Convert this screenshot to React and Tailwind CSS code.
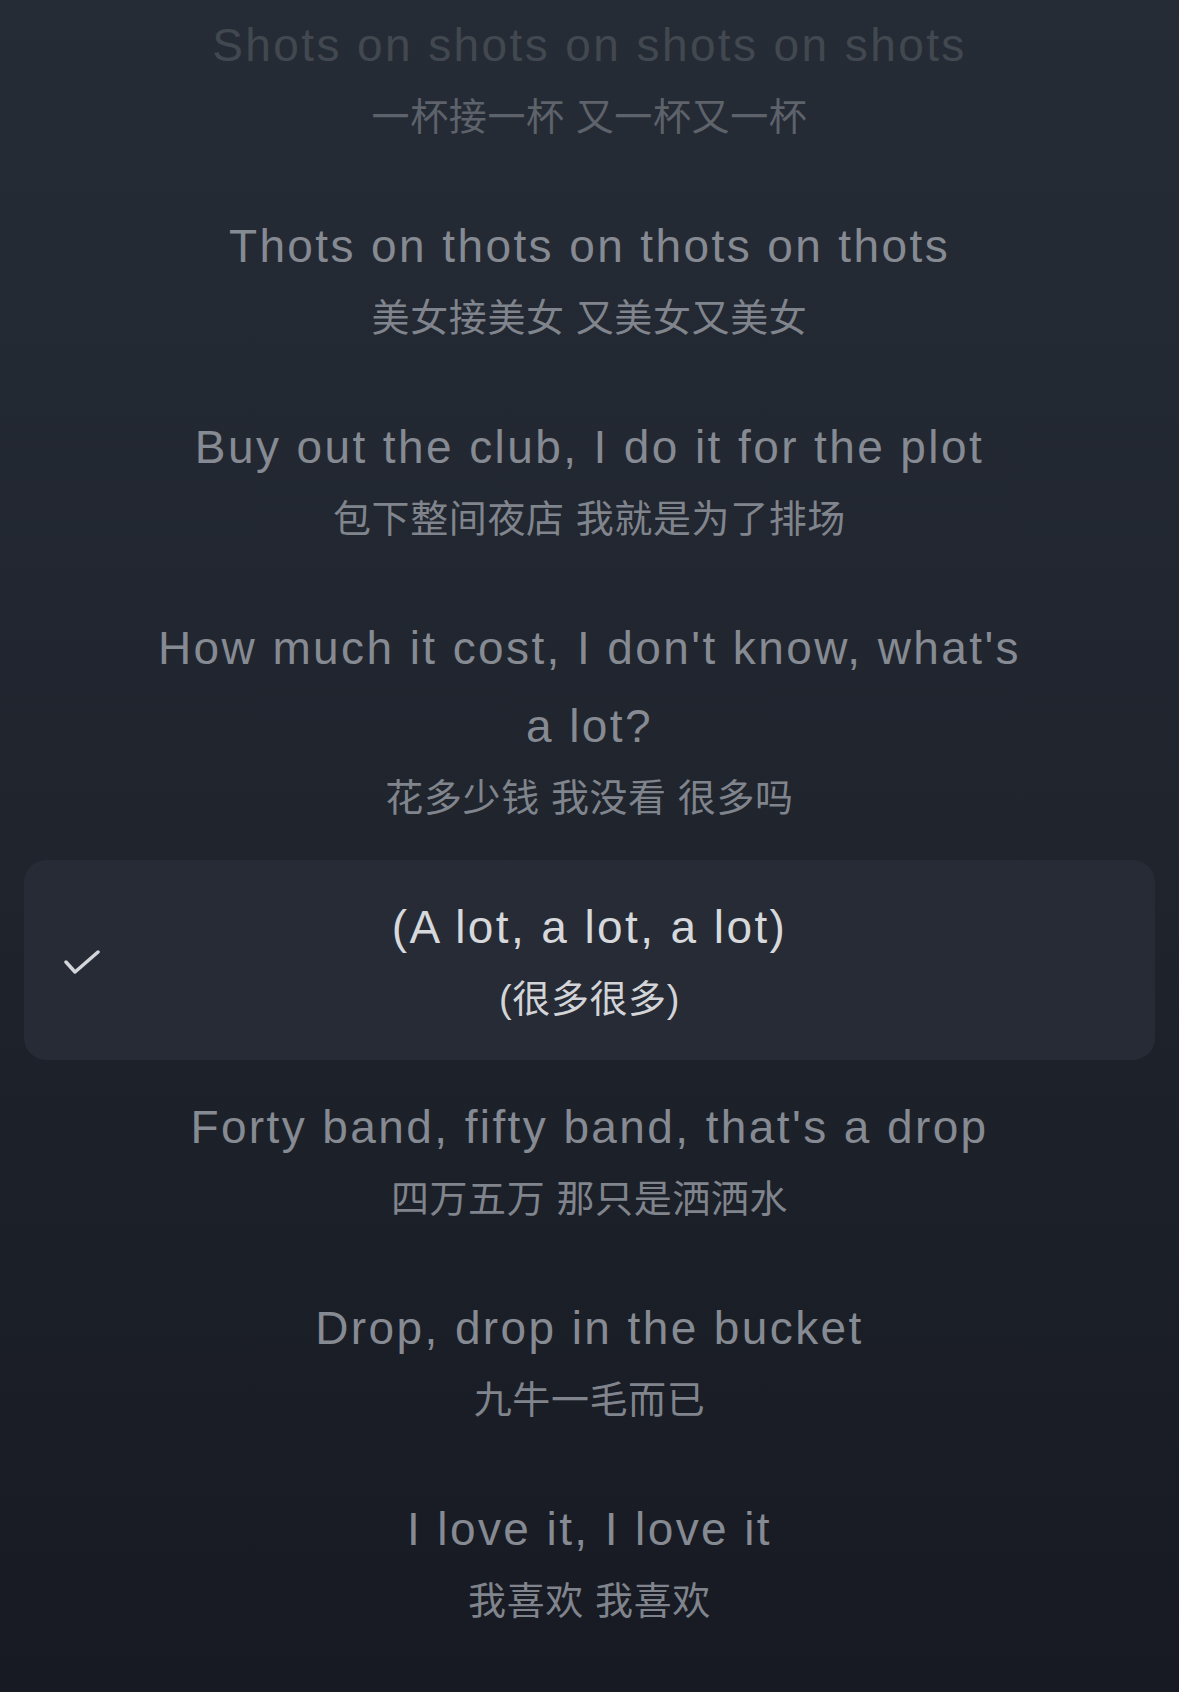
import React from "react";

const lyrics = [
  { en: "Shots on shots on shots on shots", zh: "一杯接一杯 又一杯又一杯", fade: true },
  { en: "Thots on thots on thots on thots", zh: "美女接美女 又美女又美女" },
  { en: "Buy out the club, I do it for the plot", zh: "包下整间夜店 我就是为了排场" },
  { en: "How much it cost, I don't know, what's a lot?", zh: "花多少钱 我没看 很多吗" },
  { en: "(A lot, a lot, a lot)", zh: "(很多很多)", active: true },
  { en: "Forty band, fifty band, that's a drop", zh: "四万五万 那只是洒洒水" },
  { en: "Drop, drop in the bucket", zh: "九牛一毛而已" },
  { en: "I love it, I love it", zh: "我喜欢 我喜欢" },
];

function Check() {
  return (
    <svg width="40" height="32" viewBox="0 0 40 32" className="absolute left-[40px] top-1/2 -translate-y-1/2 mt-[2px]">
      <path d="M2 16 L11 26 L34 6" fill="none" stroke="#d3d5d8" strokeWidth="3.5" strokeLinecap="round" strokeLinejoin="round" />
    </svg>
  );
}

function Line({ item }) {
  const enColor = item.active ? "text-[#d6d8db]" : item.fade ? "text-[#42484f]" : "text-[#868a92]";
  const zhColor = item.active ? "text-[#d2d4d7]" : item.fade ? "text-[#5d626b]" : "text-[#80848c]";

  return (
    <div
      className={
        item.active
          ? "relative mx-[24px] rounded-[22px] bg-[#262b35] pt-[28px] pb-[28px] flex flex-col items-center"
          : "relative pt-[28px] pb-[29px] flex flex-col items-center"
      }
    >
      {item.active && <Check />}
      <div
        className={`w-[880px] text-center text-[46px] leading-[78px] tracking-[2.4px] ${enColor}`}
        style={{ fontFamily: '"Liberation Sans", "Noto Sans CJK SC", sans-serif' }}
      >
        {item.en}
      </div>
      <div
        className={`text-center text-[38px] leading-[66px] tracking-[0.6px] ${zhColor}`}
        style={{ fontFamily: '"Liberation Sans", "Noto Sans CJK SC", sans-serif' }}
      >
        {item.zh}
      </div>
    </div>
  );
}

export default function App() {
  return (
    <div className="h-[1692px] w-full overflow-hidden bg-linear-to-b from-[#262c36] via-[#1f242d] to-[#171a22]">
      <div className="-mt-[22px] flex flex-col">
        {lyrics.map((l, i) => (
          <Line key={i} item={l} />
        ))}
      </div>
    </div>
  );
}
